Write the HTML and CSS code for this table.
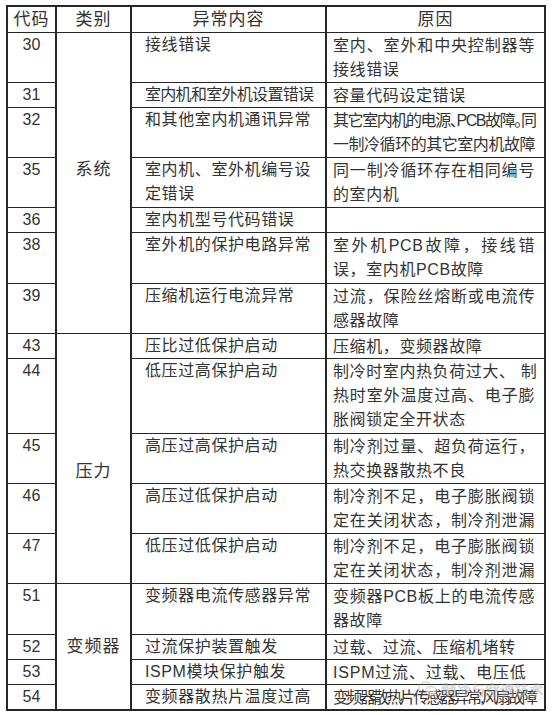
FILE: index.html
```html
<!DOCTYPE html>
<html lang="zh-CN">
<head>
<meta charset="utf-8">
<title>故障代码表</title>
<link rel="stylesheet" href="styles.css">
</head>
<body>
<div class="page">
  <div class="codes">
    <div class="hd">代码</div>
    <div class="hd">类别</div>
    <div class="hd">异常内容</div>
    <div class="hd">原因</div>

    <div class="code">30</div>
    <div class="cat cat-sys">系统</div>
    <div class="item">接线错误</div>
    <div class="reason"><span class="j">室内、室外和中央控制器等</span>接线错误</div>

    <div class="code">31</div>
    <div class="item tight">室内机和室外机设置错误</div>
    <div class="reason">容量代码设定错误</div>

    <div class="code">32</div>
    <div class="item">和其他室内机通讯异常</div>
    <div class="reason"><span class="j squeeze">其它室内机的电源、PCB故障。同</span><span class="j squeeze2">一制冷循环的其它室内机故障</span></div>

    <div class="code">35</div>
    <div class="item">室内机、室外机编号设<br>定错误</div>
    <div class="reason"><span class="j">同一制冷循环存在相同编号</span>的室内机</div>

    <div class="code">36</div>
    <div class="item">室内机型号代码错误</div>
    <div class="reason"></div>

    <div class="code">38</div>
    <div class="item">室外机的保护电路异常</div>
    <div class="reason"><span class="j">室外机PCB故障，接线错</span>误，室内机PCB故障</div>

    <div class="code">39</div>
    <div class="item">压缩机运行电流异常</div>
    <div class="reason"><span class="j">过流，保险丝熔断或电流传</span>感器故障</div>

    <div class="code">43</div>
    <div class="cat cat-press">压力</div>
    <div class="item">压比过低保护启动</div>
    <div class="reason">压缩机，变频器故障</div>

    <div class="code">44</div>
    <div class="item">低压过高保护启动</div>
    <div class="reason"><span class="j">制冷时室内热负荷过大、 制</span><span class="j">热时室外温度过高、电子膨</span>胀阀锁定全开状态</div>

    <div class="code">45</div>
    <div class="item">高压过高保护启动</div>
    <div class="reason"><span class="j">制冷剂过量、超负荷运行，</span>热交换器散热不良</div>

    <div class="code">46</div>
    <div class="item">高压过低保护启动</div>
    <div class="reason"><span class="j">制冷剂不足，电子膨胀阀锁</span><span class="j">定在关闭状态，制冷剂泄漏</span></div>

    <div class="code">47</div>
    <div class="item">低压过低保护启动</div>
    <div class="reason"><span class="j">制冷剂不足，电子膨胀阀锁</span><span class="j">定在关闭状态，制冷剂泄漏</span></div>

    <div class="code">51</div>
    <div class="cat cat-inv">变频器</div>
    <div class="item">变频器电流传感器异常</div>
    <div class="reason"><span class="j">变频器PCB板上的电流传感</span>器故障</div>

    <div class="code">52</div>
    <div class="item">过流保护装置触发</div>
    <div class="reason">过载、过流、压缩机堵转</div>

    <div class="code">53</div>
    <div class="item">ISPM模块保护触发</div>
    <div class="reason wide">ISPM过流、过载、电压低</div>

    <div class="code">54</div>
    <div class="item">变频器散热片温度过高</div>
    <div class="reason"><span class="j crush">变频器散热片传感器异常,风扇故障</span></div>
  </div>
  <div class="watermark">
    <svg class="wm-icon" width="20" height="16" viewBox="0 0 20 16" aria-hidden="true">
      <ellipse cx="7.5" cy="6.5" rx="6.5" ry="5.5" fill="none" stroke="#9a9a9a" stroke-width="1"/>
      <ellipse cx="13" cy="10" rx="5.5" ry="4.5" fill="#fff" stroke="#9a9a9a" stroke-width="1"/>
    </svg>
    <span class="wm-text">制冷与空调技术</span>
  </div>
</div>
</body>
</html>
```
FILE: styles.css
```css
html, body {
  margin: 0;
  padding: 0;
  background: #ffffff;
}

.page {
  position: relative;
  width: 552px;
  height: 715px;
  padding: 5px 0 0 6px;
  box-sizing: border-box;
}

.codes {
  display: grid;
  width: 540px;
  box-sizing: border-box;
  grid-template-columns: 47px 73px 193px 217px;
  grid-template-rows: 25px 49px 24px 49px 49px 24px 50px 49px 24px 74px 49px 49px 49px 50px 24px 24px 24px;
  column-gap: 2px;
  row-gap: 1px;
  padding: 2px;
  background: #262626;
  font-family: "Liberation Sans", "Noto Sans CJK SC", sans-serif;
  font-size: 16px;
  line-height: 24px;
  color: #333333;
  letter-spacing: 0.6px;
}

.codes > div {
  background: #ffffff;
  white-space: nowrap;
  overflow: hidden;
}

.hd {
  text-align: center;
  font-size: 17px;
  line-height: 25px;
  letter-spacing: 1px;
}

.code {
  text-align: center;
  letter-spacing: 0;
}

.cat {
  text-align: center;
  font-size: 17px;
  letter-spacing: 1px;
}
.cat-sys { grid-row: span 7; padding-top: 125px; }
.cat-press { grid-row: span 5; padding-top: 126px; }
.cat-inv { grid-row: span 4; padding-top: 51px; }

.item {
  padding-left: 13px;
}

.reason {
  padding: 1px 9px 0 6px;
}

.j {
  display: block;
  text-align: justify;
  text-align-last: justify;
  text-justify: inter-character;
}

.tight { letter-spacing: -0.7px; }
.squeeze {
  letter-spacing: -1.4px;
  font-feature-settings: "halt";
}
.squeeze2 { letter-spacing: -0.5px; }
.crush { letter-spacing: -2.8px; }
.wide { letter-spacing: 0.8px; }

.watermark {
  position: absolute;
  left: 418px;
  top: 681px;
  display: flex;
  align-items: center;
  gap: 4px;
  opacity: 0.5;
  pointer-events: none;
}
.wm-text {
  font-family: "Noto Sans CJK SC", sans-serif;
  font-size: 14px;
  line-height: 16px;
  color: #ffffff;
  -webkit-text-stroke: 0.6px #8a8a8a;
  letter-spacing: 0.5px;
}
```
